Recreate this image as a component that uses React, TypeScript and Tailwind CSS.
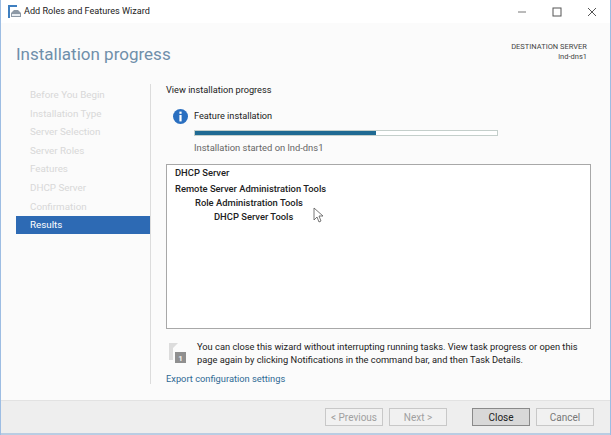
const steps = [
  "Before You Begin",
  "Installation Type",
  "Server Selection",
  "Server Roles",
  "Features",
  "DHCP Server",
  "Confirmation",
];

function AppIcon() {
  return (
    <svg width="16" height="16" viewBox="0 0 16 16" className="shrink-0">
      <rect x="1" y="1" width="2" height="13" fill="#3f7fc0" />
      <rect x="1" y="1" width="9" height="2" fill="#3f7fc0" />
      <path d="M4 9l3-3h4l3 3v4H4z" fill="#8d99a6" />
      <rect x="5" y="10" width="8" height="2" fill="#e8edf2" />
    </svg>
  );
}

function InfoIcon() {
  return (
    <svg width="15" height="15" viewBox="0 0 15 15" className="shrink-0">
      <circle cx="7.5" cy="7.5" r="7.5" fill="#2a6fc0" />
      <rect x="6.4" y="2.6" width="2.2" height="2.2" fill="#ffffff" />
      <rect x="6.4" y="6" width="2.2" height="6.4" fill="#ffffff" />
    </svg>
  );
}

function FlagIcon() {
  return (
    <svg width="18" height="20" viewBox="0 0 18 20" className="shrink-0">
      <path d="M0 0h9L4 5v12H0z" fill="#dcdcdc" />
      <rect x="6" y="9" width="11" height="11" fill="#8f8f8f" />
      <text x="11.5" y="17.5" textAnchor="middle" fontSize="8" fontWeight="700" fill="#f2f2f2">1</text>
    </svg>
  );
}

function WizardButton({
  label,
  disabled,
  active,
}: {
  label: string;
  disabled?: boolean;
  active?: boolean;
}) {
  return (
    <div
      className={
        active
          ? "w-[58px] h-[18px] flex items-center justify-center border border-[#8a8a8a] bg-[#d8d8d8] text-[#222222] text-[10px]"
          : "w-[58px] h-[18px] flex items-center justify-center border border-[#c8c8c8] bg-[#f1f1f1] text-[10px] " +
            (disabled ? "text-[#a0a0a0]" : "text-[#777777]")
      }
    >
      {label}
    </div>
  );
}

export default function App() {
  return (
    <div className="w-[611px] h-[435px] flex flex-col overflow-hidden bg-[#fbfbfb] border-l border-r border-[#9dbde3] font-['Roboto','Liberation_Sans',sans-serif]">
      {/* title bar */}
      <div className="h-[23px] shrink-0 flex items-center bg-white pl-[6px]">
        <AppIcon />
        <span className="ml-[1px] text-[9.1px] text-[#222222]">Add Roles and Features Wizard</span>
        <div className="ml-auto flex items-center gap-[25px] pr-[13px]">
          <svg width="10" height="10" viewBox="0 0 10 10"><path d="M1 5h8" stroke="#777777" strokeWidth="1" /></svg>
          <svg width="10" height="10" viewBox="0 0 10 10"><rect x="1" y="1" width="8" height="8" fill="none" stroke="#555555" /></svg>
          <svg width="10" height="10" viewBox="0 0 10 10"><path d="M1 1l8 8M9 1l-8 8" stroke="#555555" /></svg>
        </div>
      </div>

      {/* header */}
      <div className="h-[61px] shrink-0 flex justify-between pl-[15px] pr-[23px]">
        <h1 className="mt-[19px] text-[17px] leading-[24px] font-normal text-[#6f8faa]">Installation progress</h1>
        <div className="mt-[19px] text-right text-[7.5px] leading-[10px] text-[#444444]">
          <div>DESTINATION SERVER</div>
          <div>lnd-dns1</div>
        </div>
      </div>

      {/* body */}
      <div className="flex-1 flex min-h-0">
        {/* nav */}
        <div className="w-[149px] shrink-0 pl-[15px] pt-[2px]">
          {steps.map((s) => (
            <div key={s} className="h-[18.6px] pl-[14px] flex items-center text-[9.8px] text-[#d8d8d8]">
              {s}
            </div>
          ))}
          <div className="h-[18px] pl-[14px] flex items-center text-[9.8px] text-white bg-[#2d6ab4]">Results</div>
        </div>

        {/* divider + content */}
        <div className="flex-1 min-w-0 border-l border-[#dcdcdc] h-[300px] pl-[15px] pr-[19px]">
          <div className="text-[9.2px] leading-[12px] text-[#222222]">View installation progress</div>

          <div className="mt-[13px] flex pl-[7px]">
            <InfoIcon />
            <div className="ml-[6px] flex-1">
              <div className="text-[9.2px] leading-[14px] text-[#222222]">Feature installation</div>
              <div className="mt-[7px] h-[6px] bg-white border border-[#c4cfcb] w-[304px]">
                <div className="h-full bg-[#1f6a93]" style={{ width: "60%" }} />
              </div>
              <div className="mt-[5px] text-[9.4px] leading-[14px] text-[#666666]">Installation started on lnd-dns1</div>
            </div>
          </div>

          <div className="mt-[9px] h-[165px] border border-[#a8a8a8] bg-white pt-[1px] pl-[8px] text-[9.4px] font-medium text-[#222222]">
            <div className="leading-[14px]">DHCP Server</div>
            <div className="leading-[14px] mt-[2px]">Remote Server Administration Tools</div>
            <div className="leading-[14px] pl-[20px]">Role Administration Tools</div>
            <div className="leading-[14px] pl-[39px]">DHCP Server Tools</div>
          </div>

          <div className="mt-[11px] flex pl-[3px]">
            <div className="pt-[3px]">
              <FlagIcon />
            </div>
            <p className="ml-[10px] text-[9.3px] leading-[13px] text-[#222222] whitespace-nowrap">
              You can close this wizard without interrupting running tasks. View task progress or open this
              <br />
              page again by clicking Notifications in the command bar, and then Task Details.
            </p>
          </div>
          <div className="mt-[6px] text-[9.3px] leading-[14px] text-[#2f6a94]">Export configuration settings</div>
        </div>
      </div>

      {/* footer */}
      <div className="h-[35px] shrink-0 flex items-center justify-end bg-[#eeeeee] border-t border-[#e2e2e2] border-b-2 border-b-[#b9cde3] pr-[16px]">
        <WizardButton label="< Previous" disabled />
        <div className="ml-[6px]"><WizardButton label="Next >" disabled /></div>
        <div className="ml-[25px]"><WizardButton label="Close" active /></div>
        <div className="ml-[6px]"><WizardButton label="Cancel" /></div>
      </div>

      {/* pointer over the list */}
      <svg width="12" height="17" viewBox="0 0 12 17" className="absolute left-[313px] top-[207px]">
        <path d="M1 1v12l3-3 2 5 2-1-2-5h4z" fill="#ffffff" stroke="#555555" strokeWidth="0.8" />
      </svg>
    </div>
  );
}
